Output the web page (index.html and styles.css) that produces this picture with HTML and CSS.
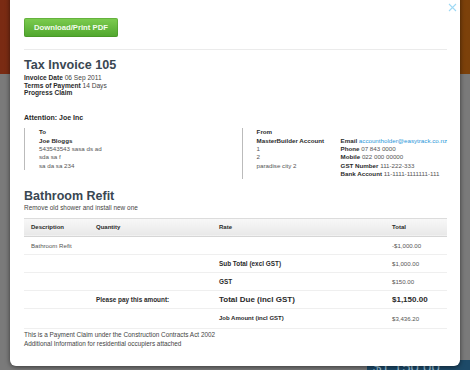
FILE: index.html
```html
<!DOCTYPE html>
<html>
<head>
<meta charset="utf-8">
<link rel="stylesheet" href="styles.css">
</head>
<body>
<div class="page">
  <div class="page-band"></div>
  <div class="page-body">
    <div class="page-total">$1,150.00</div>
  </div>
</div>

<div class="modal">
  <button class="close" aria-label="Close">
    <svg width="9" height="9" viewBox="0 0 9 9"><path d="M1 1 L8 8 M8 1 L1 8" stroke="#9fd9f4" stroke-width="1.1" fill="none"/></svg>
  </button>
  <a class="btn-pdf">Download/Print PDF</a>
  <div class="rule"></div>

  <h1 class="title">Tax Invoice 105</h1>
  <div class="meta">
    <div><b>Invoice Date</b> 06 Sep 2011</div>
    <div><b>Terms of Payment</b> 14 Days</div>
    <div><b>Progress Claim</b></div>
  </div>

  <div class="attention"><b>Attention: Joe Inc</b></div>

  <div class="parties">
    <div class="party party-to">
      <div class="label">To</div>
      <div class="label">Joe Bloggs</div>
      <div>543543543 sasa ds ad</div>
      <div>sda sa f</div>
      <div>sa da sa 234</div>
    </div>
    <div class="party party-from">
      <div class="label">From</div>
      <div class="from-cols">
        <div class="from-addr">
          <div class="label">MasterBuilder Account</div>
          <div>1</div>
          <div>2</div>
          <div>paradise city 2</div>
        </div>
        <div class="from-contact">
          <div><b>Email</b> <a class="link">accountholder@easytrack.co.nz</a></div>
          <div><b>Phone</b> 07 843 0000</div>
          <div><b>Mobile</b> 022 000 00000</div>
          <div><b>GST Number</b> 111-222-333</div>
          <div><b>Bank Account</b> 11-1111-1111111-111</div>
        </div>
      </div>
    </div>
  </div>

  <h2 class="job-title">Bathroom Refit</h2>
  <div class="job-desc">Remove old shower and install new one</div>

  <table class="items">
    <thead>
      <tr><th class="c1">Description</th><th class="c2">Quantity</th><th class="c3">Rate</th><th class="c4">Total</th></tr>
    </thead>
    <tbody>
      <tr><td>Bathroom Refit</td><td></td><td></td><td>-$1,000.00</td></tr>
      <tr><td></td><td></td><td class="strong">Sub Total (excl GST)</td><td>$1,000.00</td></tr>
      <tr><td></td><td></td><td class="strong">GST</td><td>$150.00</td></tr>
      <tr class="due"><td></td><td class="strong">Please pay this amount:</td><td class="big">Total Due (incl GST)</td><td class="big">$1,150.00</td></tr>
      <tr class="job"><td></td><td></td><td class="small-strong">Job Amount (incl GST)</td><td>$3,436.20</td></tr>
    </tbody>
  </table>

  <div class="notes">
    <div>This is a Payment Claim under the Construction Contracts Act 2002</div>
    <div>Additional Information for residential occupiers attached</div>
  </div>
</div>
</body>
</html>
```

FILE: styles.css
```css
html, body {
  margin: 0;
  padding: 0;
}
body {
  width: 470px;
  height: 370px;
  overflow: hidden;
  position: relative;
  font-family: "Liberation Sans", Arial, sans-serif;
  background: #7b7b7b;
}

.page {
  display: flex;
  flex-direction: column;
  height: 370px;
}
.page-band {
  height: 74px;
  background: linear-gradient(90deg, #7a2b13 0%, #7b3510 50%, #7c410a 100%);
}
.page-body {
  flex: 1;
  display: flex;
  flex-direction: column;
  justify-content: flex-end;
  background: #7a7a7a;
}
.page-total {
  margin-left: 367px;
  height: 10px;
  background: #1d4a68;
  color: #9cc2d8;
  font-size: 15px;
  line-height: 14px;
  padding-left: 6px;
  overflow: hidden;
}

.modal {
  position: absolute;
  left: 10px;
  top: -10px;
  width: 450px;
  height: 376px;
  box-sizing: border-box;
  background: #fff;
  border-radius: 6px;
  box-shadow: 0 1px 5px rgba(0, 0, 0, 0.55);
  padding: 28px 13px 0 14px;
  color: #444;
}

.close {
  position: absolute;
  right: 2px;
  top: 12px;
  width: 11px;
  height: 11px;
  padding: 1px;
  border: 0;
  background: none;
  display: flex;
}

.btn-pdf {
  display: block;
  width: max-content;
  height: 19px;
  line-height: 19px;
  padding: 0 10px;
  border-radius: 2px;
  background: linear-gradient(#7dcd50, #4fa52d);
  box-shadow: inset 0 0 0 1px rgba(60, 130, 30, 0.35);
  color: #f3fbee;
  font-weight: bold;
  font-size: 7.7px;
}

.rule {
  margin-top: 12px;
  height: 1px;
  background: #ebebeb;
}

.title {
  margin: 8px 0 0;
  font-size: 12.6px;
  line-height: 14px;
  color: #3a4752;
  font-weight: bold;
}

.meta {
  margin-top: 2px;
  font-size: 6.6px;
  line-height: 7.7px;
  color: #444;
}
.meta b {
  color: #2a2a2a;
}

.attention {
  margin-top: 17px;
  font-size: 7px;
  line-height: 8px;
  color: #2a2a2a;
}

.parties {
  margin-top: 6px;
  display: flex;
  font-size: 6.2px;
  line-height: 8.4px;
  color: #555;
}
.party {
  border-left: 1px solid #bbb;
  padding-left: 14px;
  align-self: flex-start;
}
.party-to {
  width: 205px;
}
.party-from {
  flex: 1;
}
.label, .parties b {
  font-weight: bold;
  color: #2a2a2a;
}
.from-cols {
  display: flex;
}
.from-addr {
  width: 84px;
}
.from-contact {
  white-space: nowrap;
}
.link {
  color: #2a97d9;
}

.job-title {
  margin: 10px 0 0;
  font-size: 12.5px;
  line-height: 14px;
  color: #3a4752;
  font-weight: bold;
}
.job-desc {
  margin-top: 1px;
  font-size: 6.45px;
  line-height: 8px;
  color: #444;
}

.items {
  margin-top: 6px;
  width: 100%;
  border-collapse: collapse;
  font-size: 6.1px;
  color: #555;
}
.items th {
  height: 17px;
  padding: 0 0 0 7px;
  text-align: left;
  font-weight: bold;
  color: #2a2a2a;
  font-size: 6px;
  background: linear-gradient(#f8f8f8, #e8e8e8);
  border-top: 1px solid #dcdcdc;
  border-bottom: 1px solid #d6d6d6;
}
.items .c1 { width: 58px; }
.items .c2 { width: 116px; }
.items .c3 { width: 166px; }
.items td {
  height: 17px;
  padding: 0 0 0 7px;
  border-bottom: 1px solid #efefef;
}
.items .strong {
  font-weight: bold;
  color: #2a2a2a;
  font-size: 6.4px;
}
.items .big {
  font-weight: bold;
  color: #2a2a2a;
  font-size: 8px;
}
.items .small-strong {
  font-weight: bold;
  color: #2a2a2a;
  font-size: 6px;
}
.items .job td {
  height: 19px;
}

.notes {
  margin-top: 1px;
  font-size: 6.4px;
  line-height: 9px;
  color: #444;
}
```
